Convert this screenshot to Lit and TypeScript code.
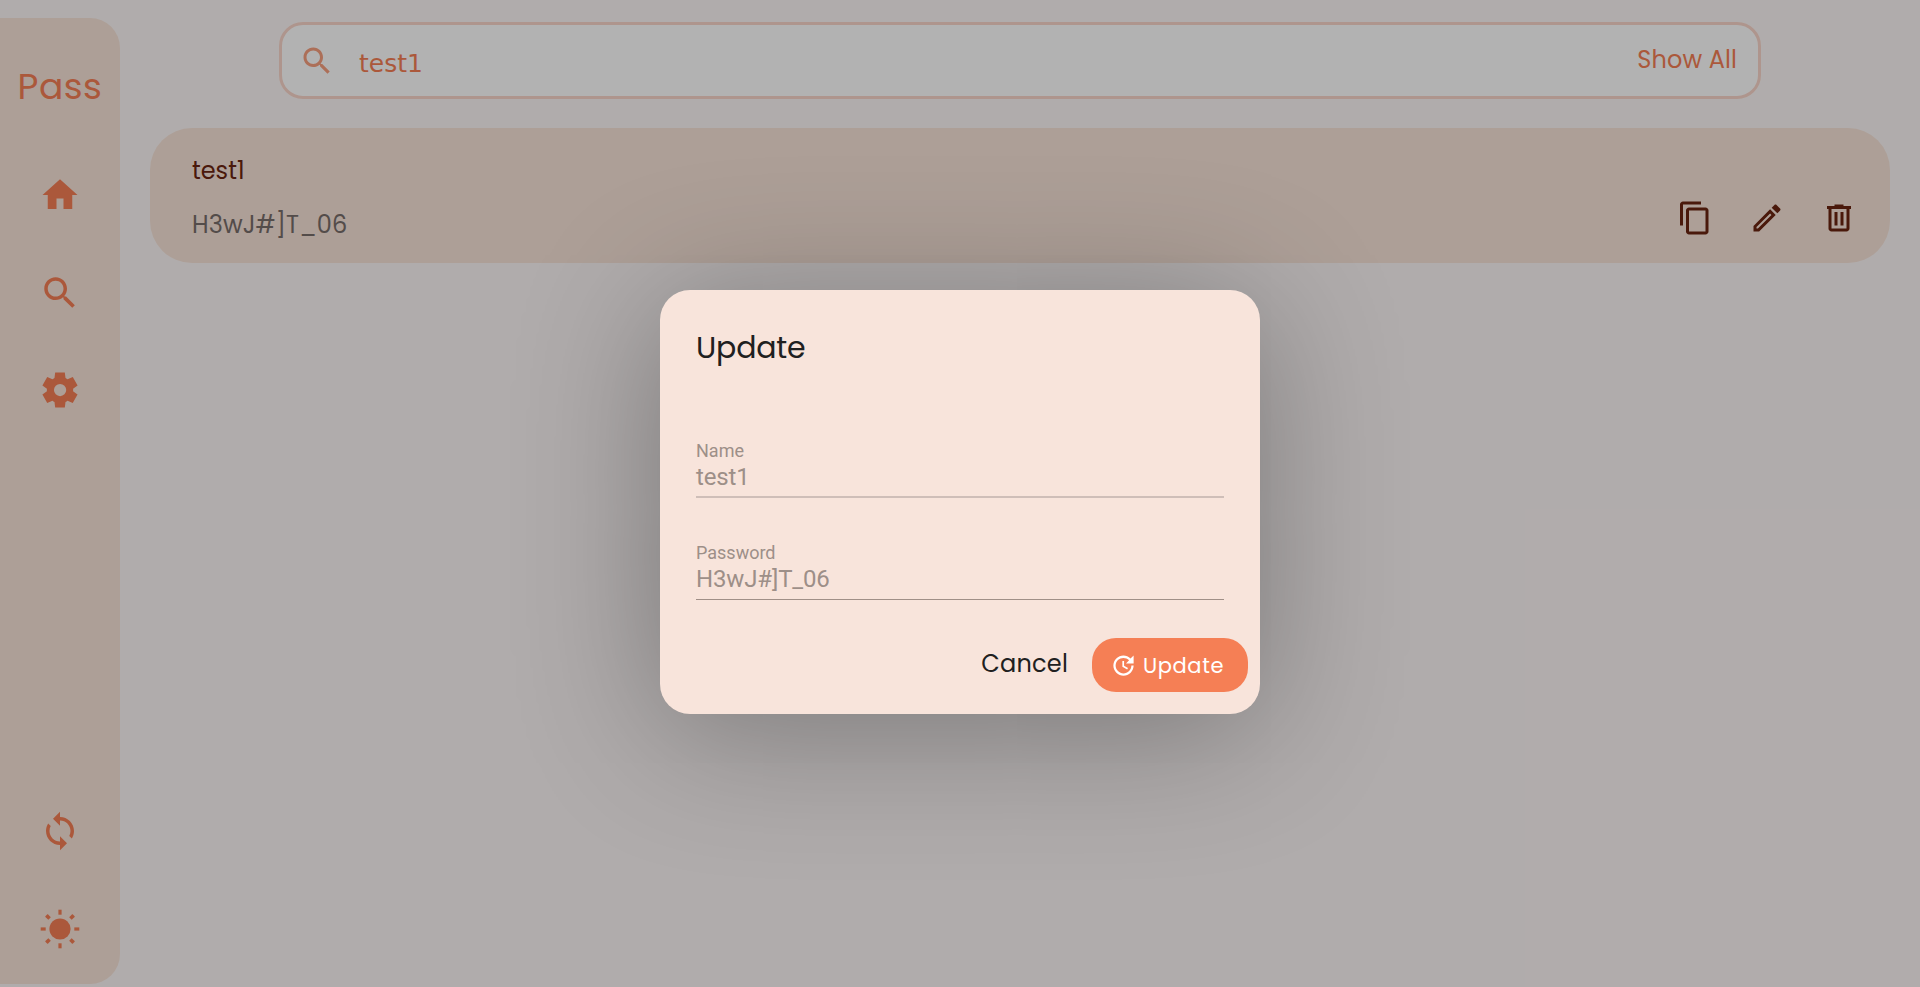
import { LitElement, html, css, svg } from "lit";
import { customElement } from "lit/decorators.js";

const icons: Record<string, string> = {
  home: "M10 20v-6h4v6h5v-8h3L12 3 2 12h3v8z",
  search:
    "M15.5 14h-.79l-.28-.27C15.41 12.59 16 11.11 16 9.5 16 5.91 13.09 3 9.5 3S3 5.91 3 9.5 5.91 16 9.5 16c1.61 0 3.09-.59 4.23-1.57l.27.28v.79l5 4.99L20.49 19l-4.99-5zm-6 0C7.01 14 5 11.99 5 9.5S7.01 5 9.5 5 14 7.01 14 9.5 11.99 14 9.5 14z",
  sync: "M12 4V1L8 5l4 4V6c3.31 0 6 2.69 6 6 0 1.01-.25 1.97-.7 2.8l1.46 1.46C19.54 15.03 20 13.57 20 12c0-4.42-3.58-8-8-8zm0 14c-3.31 0-6-2.69-6-6 0-1.01.25-1.97.7-2.8L5.24 7.74C4.46 8.97 4 10.43 4 12c0 4.42 3.58 8 8 8v3l4-4-4-4v3z",
  copy: "M16 1H4c-1.1 0-2 .9-2 2v14h2V3h12V1zm3 4H8c-1.1 0-2 .9-2 2v14c0 1.1.9 2 2 2h11c1.1 0 2-.9 2-2V7c0-1.1-.9-2-2-2zm0 16H8V7h11v14z",
  edit: "M3 17.25V21h3.75L17.81 9.94l-3.75-3.75L3 17.25zM5.92 19H5v-.92l9.06-9.06.92.92L5.92 19zM20.71 5.63l-2.34-2.34c-.2-.2-.45-.29-.71-.29s-.51.1-.7.29l-1.83 1.83 3.75 3.75 1.83-1.83c.39-.39.39-1.02 0-1.41z",
  trash:
    "M7 21c-.55 0-1.02-.2-1.41-.59C5.2 20.02 5 19.55 5 19V6H4V4h5V3h6v1h5v2h-1v13c0 1.1-.9 2-2 2H7zM17 6H7v13h10V6zM9 17h2V8H9zM13 17h2V8h-2z",
  update:
    "M21 10.12h-6.78l2.74-2.82c-2.73-2.7-7.15-2.8-9.88-.1-2.73 2.71-2.73 7.08 0 9.79s7.15 2.71 9.88 0C18.32 15.65 19 14.08 19 12.1h2c0 1.98-.88 4.55-2.64 6.29-3.51 3.48-9.21 3.48-12.72 0-3.5-3.47-3.53-9.11-.02-12.58s9.14-3.47 12.65 0L21 3v7.12zM12.5 8v4.25l3.5 2.08-.72 1.21L11 13V8h1.5z",
};

const icon = (name: string, cls: string) =>
  html`<svg class=${cls} viewBox="0 0 24 24" fill="currentColor" fill-rule="evenodd"><path d=${icons[name]} /></svg>`;

const gear = html`<svg class="nav" viewBox="0 -960 960 960" fill="currentColor" fill-rule="evenodd">
  <path d="m370-80-16-128q-13-5-24.5-12T307-235l-119 50L78-375l103-78q-1-7-1-13.5v-27q0-6.5 1-13.5L78-585l110-190 119 50q11-8 23-15t24-12l16-128h220l16 128q13 5 24.5 12t22.5 15l119-50 110 190-103 78q1 7 1 13.5v27q0 6.5-2 13.5l103 78-110 190-118-50q-11 8-23 15t-24 12L590-80H370Zm112-260q58 0 99-41t41-99q0-58-41-99t-99-41q-59 0-99.5 41T342-480q0 58 40.5 99t99.5 41Z" />
</svg>`;

const sun = html`<svg class="nav" viewBox="0 0 42 42" fill="currentColor">
  <circle cx="21" cy="21" r="10.6" />
  ${[0, 90, 180, 270].map((a) => svg`<rect x="19.4" y="1.7" width="3.2" height="5" transform="rotate(${a} 21 21)" />`)}
  ${[45, 135, 225, 315].map((a) => svg`<rect x="19.2" y="1.7" width="3.6" height="4.6" rx="0.4" transform="rotate(${a} 21 21)" />`)}
</svg>`;

@customElement("app-root")
export class AppRoot extends LitElement {
  static styles = css`
    :host {
      display: block;
      position: relative;
      height: 987px;
      overflow: hidden;
      background: #fdf7f6;
      color: #202020;
      font-family: Poppins, Inter, "Open Sans", sans-serif;
    }
    * { box-sizing: border-box; }
    svg { display: block; flex: none; }
    .app { display: flex; height: 987px; padding-top: 18px; }
    .side {
      width: 120px; height: 966px; flex: none;
      border-radius: 0 30px 30px 0;
      background: #f8e4d9; color: #f57f55;
      display: flex; flex-direction: column; align-items: center;
      padding: 42px 0 34.5px;
    }
    .logo { font-size: 36px; line-height: 54px; letter-spacing: .5px; margin: 0 0 60px; white-space: nowrap; }
    .nav { width: 42px; height: 42px; margin-bottom: 55.5px; }
    .nav:last-child { margin-bottom: 0; }
    .spacer { flex: 1; }
    .main { flex: 1; padding: 4px 30px 0; }
    .search {
      width: 1482px; height: 77px; margin-left: 129px;
      border: 3px solid #fad6ca; border-radius: 24px;
      background: #fff; color: #f57f55;
      display: flex; align-items: center; padding: 0 21px 0 20px;
    }
    .lens { width: 36px; height: 36px; margin: 1px 0 0 -3px; opacity: .75; }
    .query { font: 25px/30px "DejaVu Sans", sans-serif; letter-spacing: 0; margin-left: 24px; flex: 1; padding-top: 6px; }
    .all { font-size: 24px; line-height: 36px; margin-top: -2px; letter-spacing: .1px; }
    .card {
      height: 135px; margin-top: 29px; border-radius: 42px;
      background: #f8e4d9; display: flex; justify-content: space-between;
      padding: 25px 33px 0 42px; font-size: 24px; line-height: 36px;
    }
    .name { color: #6a2510; }
    .pass { color: #786e6a; margin-top: 18px; letter-spacing: .1px; }
    .acts { display: flex; color: #6a2510; align-items: center; gap: 36px; height: 36px; margin-top: 47px; }
    .act { width: 36px; height: 36px; }
    .backdrop {
      position: absolute; inset: 0; background: rgba(0, 0, 0, .3);
      display: flex; align-items: center; justify-content: center; padding-top: 16px;
    }
    .dialog {
      width: 600px; height: 424px; border-radius: 30px; background: #f8e4db;
      box-shadow: 0 16px 144px 0 rgba(0,0,0,.31);
      padding: 35px 36px 0;
    }
    .title { font-size: 30px; line-height: 45px; letter-spacing: -.2px; }
    .field { height: 70px; border-bottom: 1px solid #a08f87; font-family: Roboto, sans-serif; color: #9d8f88; }
    .first { margin-top: 58.5px; border-bottom: 2px solid #cfbeb8; }
    .second { margin-top: 32px; }
    .label { font-size: 18px; line-height: 22px; padding-top: 11.5px; }
    .second .label { padding-top: 12.3px; }
    .value { font-size: 24px; line-height: 28px; margin-top: 1px; letter-spacing: -.15px; }
    .foot { display: flex; justify-content: flex-end; margin: 38px -24px 0 0; }
    .cancel { font-size: 24px; line-height: 36px; margin: 8px 24px 0 0; letter-spacing: .2px; }
    .update {
      width: 156px; height: 54px; border-radius: 24px; background: #f57f55; color: #fff;
      display: flex; align-items: center; padding: 1px 0 0 17.5px; gap: 6.5px; font-size: 21px; letter-spacing: .6px;
    }
    .clock { width: 27px; height: 27px; }
  `;

  render() {
    return html`
      <div class="app">
        <nav class="side">
          <div class="logo">Pass</div>
          ${icon("home", "nav")}${icon("search", "nav")}${gear}
          <div class="spacer"></div>
          ${icon("sync", "nav")}${sun}
        </nav>
        <main class="main">
          <div class="search">
            ${icon("search", "lens")}
            <div class="query">test1</div>
            <div class="all">Show All</div>
          </div>
          <section class="card">
            <div>
              <div class="name">test1</div>
              <div class="pass">H3wJ#]T_06</div>
            </div>
            <div class="acts">${icon("copy", "act")}${icon("edit", "act")}${icon("trash", "act")}</div>
          </section>
        </main>
      </div>
      <div class="backdrop">
        <div class="dialog" role="dialog">
          <div class="title">Update</div>
          <div class="field first"><div class="label">Name</div><div class="value">test1</div></div>
          <div class="field second"><div class="label">Password</div><div class="value">H3wJ#]T_06</div></div>
          <div class="foot">
            <div class="cancel">Cancel</div>
            <div class="update">${icon("update", "clock")}<span>Update</span></div>
          </div>
        </div>
      </div>
    `;
  }
}
